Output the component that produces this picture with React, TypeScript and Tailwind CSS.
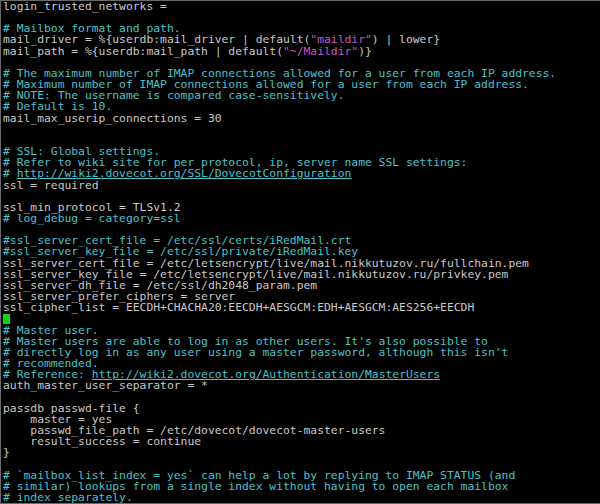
type Seg = [string, string];

const W = "w";
const C = "c";
const M = "m";
const U = "u";

// terminal buffer, one entry per row
const lines: Seg[][] = [
  [[W, "login_trusted_networks ="]],
  [],
  [[C, "# Mailbox format and path."]],
  [[W, "mail_driver = %{userdb:mail_driver | default("], [M, '"maildir"'], [W, ") | lower}"]],
  [[W, "mail_path = %{userdb:mail_path | default("], [M, '"~/Maildir"'], [W, ")}"]],
  [],
  [[C, "# The maximum number of IMAP connections allowed for a user from each IP address."]],
  [[C, "# Maximum number of IMAP connections allowed for a user from each IP address."]],
  [[C, "# NOTE: The username is compared case-sensitively."]],
  [[C, "# Default is 10."]],
  [[W, "mail_max_userip_connections = 30"]],
  [],
  [],
  [[C, "# SSL: Global settings."]],
  [[C, "# Refer to wiki site for per protocol, ip, server name SSL settings:"]],
  [[C, "# "], [U, "http://wiki2.dovecot.org/SSL/DovecotConfiguration"]],
  [[W, "ssl = required"]],
  [],
  [[W, "ssl_min_protocol = TLSv1.2"]],
  [[C, "# log_debug = category=ssl"]],
  [],
  [[C, "#ssl_server_cert_file = /etc/ssl/certs/iRedMail.crt"]],
  [[C, "#ssl_server_key_file = /etc/ssl/private/iRedMail.key"]],
  [[W, "ssl_server_cert_file = /etc/letsencrypt/live/mail.nikkutuzov.ru/fullchain.pem"]],
  [[W, "ssl_server_key_file = /etc/letsencrypt/live/mail.nikkutuzov.ru/privkey.pem"]],
  [[W, "ssl_server_dh_file = /etc/ssl/dh2048_param.pem"]],
  [[W, "ssl_server_prefer_ciphers = server"]],
  [[W, "ssl_cipher_list = EECDH+CHACHA20:EECDH+AESGCM:EDH+AESGCM:AES256+EECDH"]],
  [["cursor", " "]],
  [[C, "# Master user."]],
  [[C, "# Master users are able to log in as other users. It's also possible to"]],
  [[C, "# directly log in as any user using a master password, although this isn't"]],
  [[C, "# recommended."]],
  [[C, "# Reference: "], [U, "http://wiki2.dovecot.org/Authentication/MasterUsers"]],
  [[W, "auth_master_user_separator = *"]],
  [],
  [[W, "passdb passwd-file {"]],
  [[W, "    master = yes"]],
  [[W, "    passwd_file_path = /etc/dovecot/dovecot-master-users"]],
  [[W, "    result_success = continue"]],
  [[W, "}"]],
  [],
  [[C, "# `mailbox_list_index = yes` can help a lot by replying to IMAP STATUS (and"]],
  [[C, "# similar) lookups from a single index without having to open each mailbox"]],
  [[C, "# index separately."]],
];

function Token({ seg }: { seg: Seg }) {
  const [kind, text] = seg;
  if (kind === "cursor") {
    return <span className="mt-[1px] inline-block h-[10px] w-[7px] bg-[#10d020] align-top" />;
  }
  const base = "inline-block h-[11.16px] align-top whitespace-pre";
  if (kind === C) return <span className={`${base} text-[#4cc2cc]`}>{text}</span>;
  if (kind === M) return <span className={`${base} text-[#c955c8]`}>{text}</span>;
  if (kind === U) return <span className={`${base} text-[#4cc2cc] underline underline-offset-1`}>{text}</span>;
  return <span className={`${base} text-[#c9c9c9]`}>{text}</span>;
}

export default function App() {
  return (
    <div className="h-[504px] w-[600px] overflow-hidden border-t border-b border-l border-[#6a6a6a] bg-black">
      <div className="pl-[2px] font-['DejaVu_Sans_Mono',monospace] text-[11.35px] leading-[11.16px]">
        {lines.map((line, i) => (
          <div key={i} className="flex h-[11.16px] whitespace-pre">
            {line.map((seg, j) => (
              <Token key={j} seg={seg} />
            ))}
          </div>
        ))}
      </div>
    </div>
  );
}
